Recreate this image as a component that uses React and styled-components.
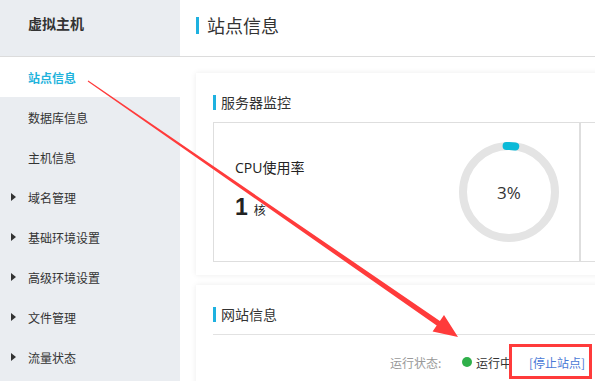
import React from "react";
import styled, { createGlobalStyle } from "styled-components";

const Global = createGlobalStyle`
  html, body { margin: 0; padding: 0; background: #fff; overflow: hidden; }
  body { font-family: "Open Sans", "Noto Sans CJK SC", sans-serif; color: #333; }
  * { box-sizing: border-box; }
`;

const Page = styled.div`
  position: relative;
  width: 595px;
  height: 381px;
  display: flex;
  overflow: hidden;
`;

const Sidebar = styled.nav`
  width: 180px;
  flex: none;
  background: #eaedf1;
  display: flex;
  flex-direction: column;
`;

const SideHead = styled.div`
  height: 57px;
  padding: 13px 0 0 28px;
  font-size: 14px;
  font-weight: bold;
  color: #333;
  border-bottom: 1px solid #dcdcdc;
  font-family: "Noto Sans CJK SC", sans-serif;
`;

const SideItem = styled.div`
  height: 40px;
  display: flex;
  align-items: center;
  padding-left: 28px;
  position: relative;
  font-size: 12px;
  font-family: "Noto Sans CJK SC", sans-serif;
  color: ${(p) => (p.$active ? "#1fb3dc" : "#333")};
  background: ${(p) => (p.$active ? "#fff" : "transparent")};
  font-weight: ${(p) => (p.$active ? "bold" : "normal")};
`;

const Caret = styled.span`
  position: absolute;
  left: 11px;
  top: 16px;
  width: 0;
  height: 0;
  border-top: 4px solid transparent;
  border-bottom: 4px solid transparent;
  border-left: 5px solid #333;
`;

const Main = styled.main`
  flex: 1;
  min-width: 0;
  display: flex;
  flex-direction: column;
`;

const MainHead = styled.div`
  height: 57px;
  flex: none;
  border-bottom: 1px solid #dcdcdc;
  display: flex;
  align-items: flex-start;
  padding: 13px 0 0 16px;
`;

const Bar = styled.span`
  display: inline-block;
  width: 3px;
  height: ${(p) => p.$h}px;
  background: #1eb1e0;
  margin-right: ${(p) => p.$gap}px;
  flex: none;
`;

const PageTitle = styled.h1`
  margin: 0;
  font-size: 18px;
  font-weight: normal;
  line-height: 24px;
  color: #333;
  font-family: "Noto Sans CJK SC", sans-serif;
  display: flex;
  align-items: center;
`;

const Content = styled.div`
  padding: 16px 0 0 16px;
  display: flex;
  flex-direction: column;
  gap: 10px;
`;

const Card = styled.section`
  width: 760px;
  background: #fff;
  box-shadow: 0 0 6px rgba(0, 0, 0, 0.08);
  padding: 0 17px;
  height: ${(p) => p.$h}px;
`;

const CardTitle = styled.h2`
  margin: 0;
  font-size: 14px;
  font-weight: normal;
  color: #333;
  font-family: "Noto Sans CJK SC", sans-serif;
  display: flex;
  align-items: center;
  padding-top: 19px;
  height: 39px;
  line-height: 20px;
`;

const StatBox = styled.div`
  margin-top: 10px;
  display: flex;
  border: 1px solid #dedede;
  height: 140px;
`;

const StatCell = styled.div`
  width: 367px;
  flex: none;
  display: flex;
  align-items: center;
  justify-content: space-between;
  padding: 0 20px 0 21px;
  border-right: 2px solid #dedede;
`;

const StatText = styled.div`
  display: flex;
  flex-direction: column;
  margin-top: -6px;
`;

const StatLabel = styled.div`
  font-size: 14px;
  color: #222;
  font-family: "Open Sans", "Noto Sans CJK SC", sans-serif;
`;

const StatValue = styled.div`
  margin-top: 17px;
  display: flex;
  align-items: baseline;
  gap: 6px;
  color: #222;
  b {
    font-size: 23px;
    font-family: "Liberation Sans", sans-serif;
  }
  span {
    font-size: 12px;
    font-family: "Noto Sans CJK SC", sans-serif;
  }
`;

const Donut = styled.div`
  position: relative;
  width: 100px;
  height: 100px;
  display: flex;
  align-items: center;
  justify-content: center;
  svg { position: absolute; inset: 0; }
`;

const DonutText = styled.span`
  font-size: 17px;
  color: #333;
  font-family: "Open Sans", sans-serif;
  position: relative;
`;

const Divider = styled.div`
  margin-top: 10px;
  border-bottom: 1px solid #e2e2e2;
`;

const StatusRow = styled.div`
  display: flex;
  align-items: center;
  height: 28px;
  margin-top: 13px;
  padding-left: 177px;
  font-size: 12px;
  font-family: "Noto Sans CJK SC", sans-serif;
`;

const StatusLabel = styled.span`
  color: #999;
  width: 72px;
`;

const Dot = styled.span`
  width: 10px;
  height: 10px;
  border-radius: 50%;
  background: #2fb04a;
  margin-right: 4px;
`;

const StatusValue = styled.span`
  color: #333;
  width: 53px;
`;

const StopLink = styled.a`
  color: #4a79d6;
  text-decoration: none;
`;

const Annotation = styled.svg`
  position: absolute;
  left: 0;
  top: 0;
  pointer-events: none;
`;

function arrowPoints(sx, sy, tx, ty, w0, w1, headLen, headHalf) {
  const dx = tx - sx;
  const dy = ty - sy;
  const len = Math.hypot(dx, dy);
  const ux = dx / len;
  const uy = dy / len;
  const nx = -uy;
  const ny = ux;
  const bx = tx - ux * headLen;
  const by = ty - uy * headLen;
  const pts = [
    [sx + nx * w0, sy + ny * w0],
    [bx + nx * w1, by + ny * w1],
    [bx + nx * headHalf, by + ny * headHalf],
    [tx, ty],
    [bx - nx * headHalf, by - ny * headHalf],
    [bx - nx * w1, by - ny * w1],
    [sx - nx * w0, sy - ny * w0],
  ];
  return pts.map((p) => p.map((v) => v.toFixed(1)).join(",")).join(" ");
}

const items = [
  { label: "站点信息", active: true },
  { label: "数据库信息" },
  { label: "主机信息" },
  { label: "域名管理", caret: true },
  { label: "基础环境设置", caret: true },
  { label: "高级环境设置", caret: true },
  { label: "文件管理", caret: true },
  { label: "流量状态", caret: true },
];

export default function App() {
  const pct = 3;
  const r = 46;
  const c = 2 * Math.PI * r;
  return (
    <Page>
      <Global />
      <Sidebar>
        <SideHead>虚拟主机</SideHead>
        {items.map((it) => (
          <SideItem key={it.label} $active={it.active}>
            {it.caret && <Caret />}
            {it.label}
          </SideItem>
        ))}
      </Sidebar>
      <Main>
        <MainHead>
          <PageTitle>
            <Bar $h={17} $gap={8} />
            站点信息
          </PageTitle>
        </MainHead>
        <Content>
          <Card $h={202}>
            <CardTitle>
              <Bar $h={15} $gap={5} />
              服务器监控
            </CardTitle>
            <StatBox>
              <StatCell>
                <StatText>
                  <StatLabel>CPU使用率</StatLabel>
                  <StatValue>
                    <b>1</b>
                    <span>核</span>
                  </StatValue>
                </StatText>
                <Donut>
                  <svg width="100" height="100" viewBox="0 0 100 100">
                    <circle cx="50" cy="50" r={r} fill="none" stroke="#e4e4e4" strokeWidth="8" />
                    <circle
                      cx="50"
                      cy="50"
                      r={r}
                      fill="none"
                      stroke="#0bbad8"
                      strokeWidth="8"
                      strokeLinecap="round"
                      strokeDasharray={`${(c * pct) / 100} ${c}`}
                      transform="rotate(-93 50 50)"
                    />
                  </svg>
                  <DonutText>3%</DonutText>
                </Donut>
              </StatCell>
              <StatCell />
            </StatBox>
          </Card>
          <Card $h={120}>
            <CardTitle>
              <Bar $h={15} $gap={5} />
              网站信息
            </CardTitle>
            <Divider />
            <StatusRow>
              <StatusLabel>运行状态:</StatusLabel>
              <Dot />
              <StatusValue>运行中</StatusValue>
              <StopLink href="#">[停止站点]</StopLink>
            </StatusRow>
          </Card>
        </Content>
      </Main>
      <Annotation width="595" height="381" viewBox="0 0 595 381">
        <polygon points={arrowPoints(88, 81, 458, 337, 0.5, 2.8, 24, 10)} fill="#ff3b3b" />
        <rect x="510.5" y="345.5" width="80" height="32" fill="none" stroke="#ff3b3b" strokeWidth="3" />
      </Annotation>
    </Page>
  );
}
